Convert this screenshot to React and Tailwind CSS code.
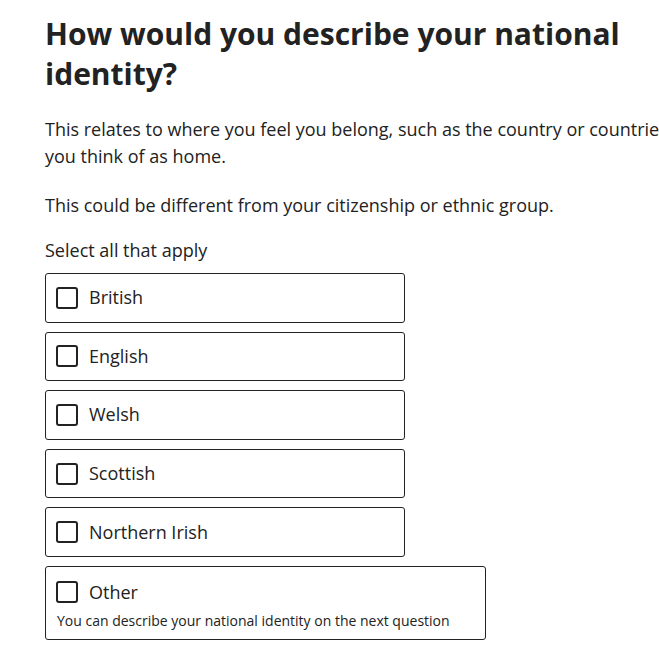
const options = ['British', 'English', 'Welsh', 'Scottish', 'Northern Irish'];

function Box() {
  return <span className="w-[22px] h-[22px] border-2 border-[#222222] rounded-[3px] bg-white flex-shrink-0" />;
}

export default function App() {
  return (
    <div className="w-[659px] h-[664px] overflow-hidden bg-white text-[#222222]" style={{ fontFamily: '"Open Sans", sans-serif' }}>
      <div className="w-[640px] pl-[45px] pt-[14px]">
        <h1 className="text-[30px] leading-[40px] font-bold w-[600px]">How would you describe your national identity?</h1>
        <p className="mt-[22px] text-[18px] leading-[27px] w-[640px]">
          This relates to where you feel you belong, such as the country or countries you think of as home.
        </p>
        <p className="mt-[22px] text-[18px] leading-[27px]">This could be different from your citizenship or ethnic group.</p>
        <p className="mt-[18px] text-[18px] leading-[27px]">Select all that apply</p>
        <div className="mt-[9px] flex flex-col gap-[9px]">
          {options.map(o => (
            <label key={o} className="w-[360px] h-[49.6px] border border-[#222222] rounded-[3px] flex items-center gap-[11px] px-[10px]">
              <Box />
              <span className="text-[18px]">{o}</span>
            </label>
          ))}
          <label className="w-[441px] border border-[#222222] rounded-[3px] px-[10px] pt-[12px] pb-[8px] flex flex-col">
            <span className="flex items-center gap-[11px]">
              <Box />
              <span className="text-[18px]">Other</span>
            </span>
            <span className="text-[14px] leading-[20px] mt-[5px] ml-[1px]">You can describe your national identity on the next question</span>
          </label>
        </div>
      </div>
    </div>
  );
}
